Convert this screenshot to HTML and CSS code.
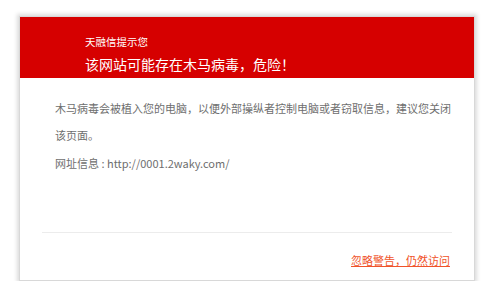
FILE: index.html
```html
<!DOCTYPE html>
<html lang="zh-CN">
  <head>
    <meta charset="UTF-8" />
    <title>天融信提示您</title>
    <link rel="stylesheet" href="styles.css">
  </head>
  <body>
    <div class="warn-box">
      <div class="warn-head">
        <div class="warn-brand">天融信提示您</div>
        <div class="warn-title">该网站可能存在木马病毒，危险！</div>
      </div>
      <div class="warn-body">
        <p class="warn-text">木马病毒会被植入您的电脑，以便外部操纵者控制电脑或者窃取信息，建议您关闭该页面。</p>
        <p class="warn-url">网址信息 : http://0001.2waky.com/</p>
      </div>
      <div class="warn-foot">
        <a class="warn-link" href="#">忽略警告，仍然访问</a>
      </div>
    </div>
  </body>
</html>
```

FILE: styles.css
```css
body {
  margin: 0;
  background: #fff;
  font-family: "Noto Sans CJK SC", "Liberation Sans", sans-serif;
}

.warn-box {
  width: 456px;
  height: 265px;
  margin: 16px 0 0 19px;
  background: #fff;
  border: 1px solid #d8d8d8;
  box-sizing: border-box;
  box-shadow: 0 0 4px 2px rgba(0, 0, 0, 0.14);
  display: flex;
  flex-direction: column;
}

.warn-head {
  background: #d60000;
  height: 61px;
  padding: 18px 0 0 65px;
  box-sizing: border-box;
  color: #fff;
}

.warn-brand {
  font-size: 10.5px;
  line-height: 14px;
}

.warn-title {
  font-size: 14px;
  line-height: 18px;
  margin-top: 6px;
}

.warn-body {
  padding: 17px 18px 0 35px;
  color: #6e6e6e;
  font-size: 11px;
  flex: 1;
}

.warn-text {
  margin: 0;
  line-height: 27px;
}

.warn-url {
  margin: 1px 0 0;
  line-height: 27px;
}

.warn-foot {
  margin: 0 22px;
  border-top: 1px solid #ececec;
  height: 48px;
  box-sizing: border-box;
  padding: 6px 2px 0 0;
  display: flex;
  justify-content: flex-end;
  align-items: center;
}

.warn-link {
  color: #f0532a;
  font-size: 11px;
  text-decoration: underline;
}
```
